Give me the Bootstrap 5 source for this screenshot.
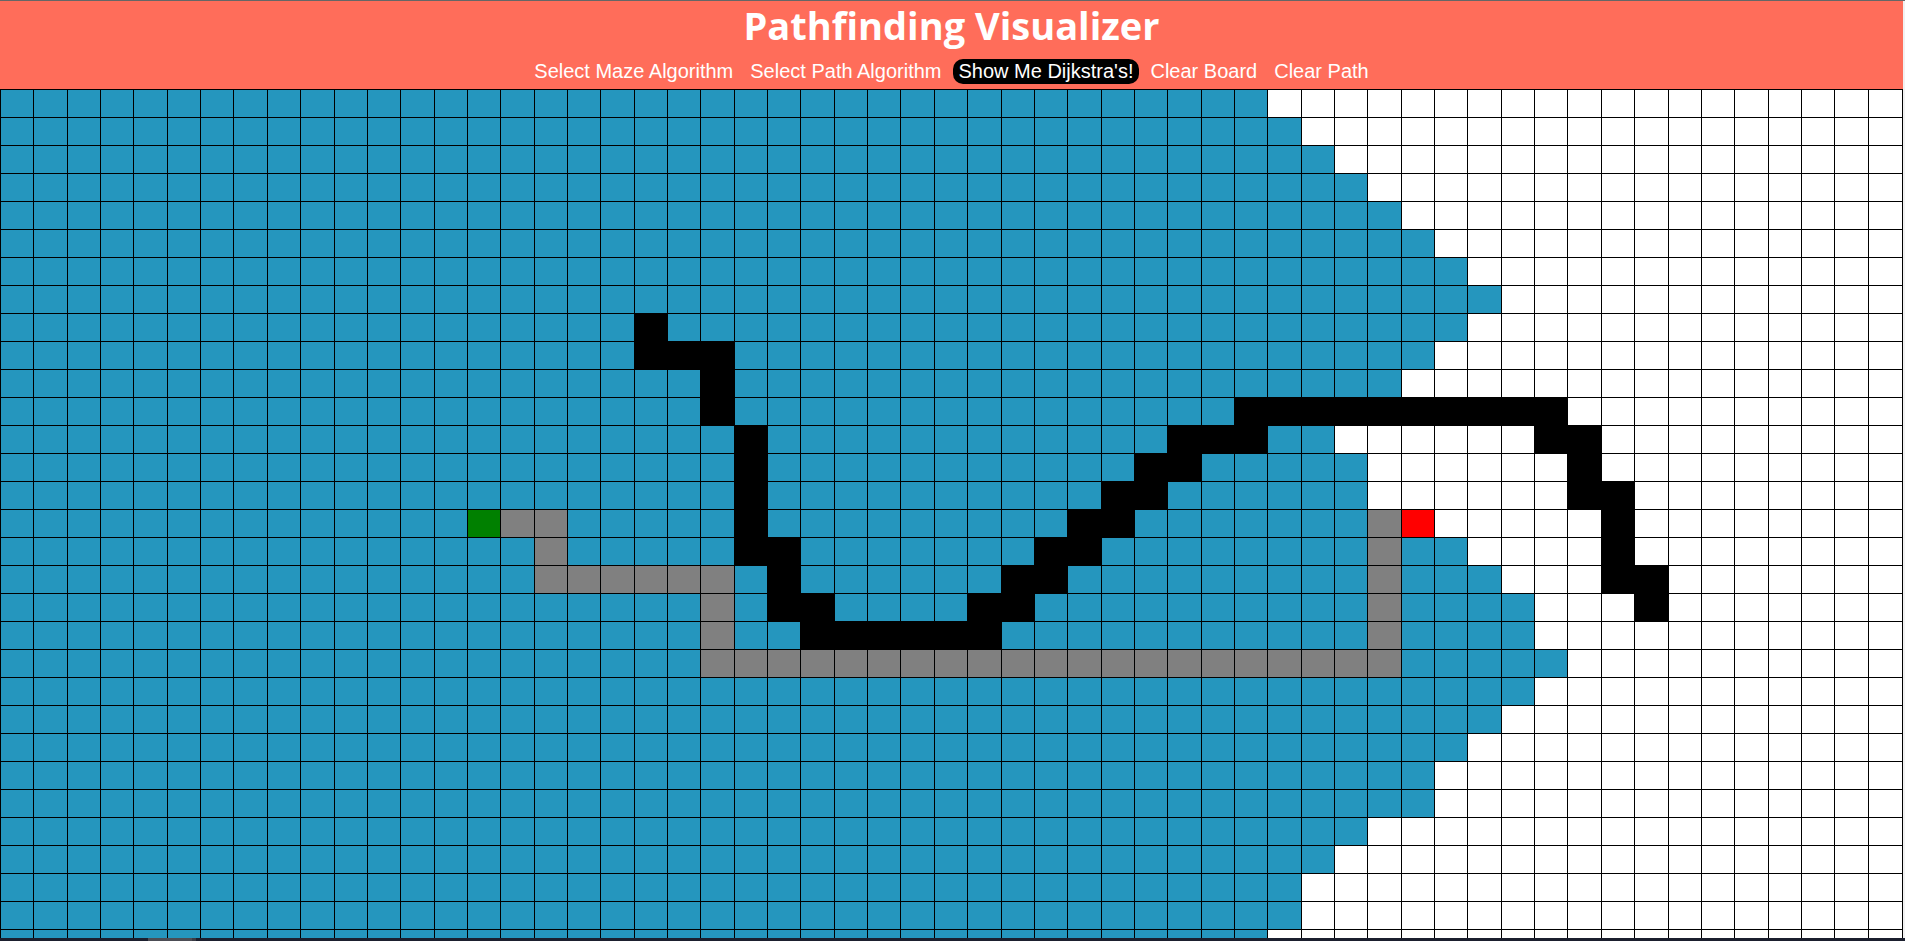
<!DOCTYPE html>
<html lang="en">
<head>
<meta charset="utf-8">
<meta name="viewport" content="width=device-width, initial-scale=1">
<title>Pathfinding Visualizer</title>
<link rel="stylesheet" href="https://cdn.jsdelivr.net/npm/bootstrap@5.3.0/dist/css/bootstrap.min.css">
<style>
  .app { border-top: 1px solid #666; }
  .track { width: 2px; background: #f1f1f1; }
  .topbar { background: #ff6d5a; height: 88px; }
  .topbar h1 { font: 700 38px/48px "Open Sans", "Noto Sans", sans-serif; }
  .tools { gap: 5px; padding-top: 10px; }
  .tool {
    font: 20px/25px "Liberation Sans", Arial, sans-serif;
    color: #fff; background: transparent; border: 0; border-radius: 10px; padding: 0 6px;
  }
  .tool.run, .tool:hover { background: #000; }
  .board {
    display: grid;
    grid-template-columns: repeat(57, minmax(0, 1fr));
    grid-auto-rows: 28px;
    border-right: 1px solid #000;
    padding-right: 1px;
    min-height: 0;
  }
  .cell { border: solid #000; border-width: 1px 0 0 1px; background: #fff; }
  .cell:nth-child(57n) { margin-right: -1px; }
  .visited { background: #2596be; }
  .route { background: #808080; }
  .wall { background: #000; }
  .start { background: #008000; }
  .goal { background: #f00; }
  .dock { height: 3px; background: #1b1f2e; padding-left: 148px; }
  .dock-tab { width: 44px; background: #4c4d55; }
  .dock-edge { width: 4px; background: #3a3c45; }
</style>
</head>
<body>
<div class="app d-flex flex-column vh-100">
  <div class="d-flex flex-grow-1" style="min-height: 0">
    <div class="d-flex flex-column flex-grow-1">
      <header class="topbar text-white text-center flex-shrink-0">
        <h1 class="m-0">Pathfinding Visualizer</h1>
        <nav class="tools d-flex justify-content-center" aria-label="Controls">
          <button type="button" class="tool">Select Maze Algorithm</button>
          <button type="button" class="tool">Select Path Algorithm</button>
          <button type="button" class="tool run">Show Me Dijkstra's!</button>
          <button type="button" class="tool">Clear Board</button>
          <button type="button" class="tool">Clear Path</button>
        </nav>
      </header>
      <main class="board flex-grow-1 overflow-hidden" id="board"></main>
    </div>
    <div class="track flex-shrink-0"></div>
  </div>
  <div class="dock d-flex flex-shrink-0">
    <div class="dock-tab"></div>
    <div class="dock-edge"></div>
  </div>
</div>
<script src="https://cdn.jsdelivr.net/npm/bootstrap@5.3.0/dist/js/bootstrap.bundle.min.js"></script>
<script>
  const COLS = 57;
  // Number of columns the search has reached in each row
  const reach = [38, 39, 40, 41, 42, 43, 44, 45, 44, 43, 42, 37, 40, 41, 41, 41,
                 44, 45, 46, 46, 47, 46, 45, 44, 43, 43, 41, 40, 39, 39, 38];
  // Spans of [first, last] column, by row
  const walls = {
    8: [[19, 19]], 9: [[19, 21]], 10: [[21, 21]], 11: [[21, 21], [37, 46]],
    12: [[22, 22], [35, 37], [46, 47]], 13: [[22, 22], [34, 35], [47, 47]],
    14: [[22, 22], [33, 34], [47, 48]], 15: [[22, 22], [32, 33], [48, 48]],
    16: [[22, 23], [31, 32], [48, 48]], 17: [[23, 23], [30, 31], [48, 49]],
    18: [[23, 24], [29, 30], [49, 49]], 19: [[24, 29]]
  };
  const route = {
    15: [[15, 16], [41, 41]], 16: [[16, 16], [41, 41]], 17: [[16, 21], [41, 41]],
    18: [[21, 21], [41, 41]], 19: [[21, 21], [41, 41]], 20: [[21, 41]]
  };
  const within = (spans, c) => (spans || []).some(([a, b]) => c >= a && c <= b);
  const board = document.getElementById('board');
  reach.forEach((end, r) => {
    for (let c = 0; c < COLS; c++) {
      const cell = document.createElement('div');
      let kind = c < end ? 'visited' : 'open';
      if (within(walls[r], c)) kind = 'wall';
      if (within(route[r], c)) kind = 'route';
      if (r === 15 && c === 14) kind = 'start';
      if (r === 15 && c === 42) kind = 'goal';
      cell.className = 'cell ' + kind;
      board.append(cell);
    }
  });
</script>
</body>
</html>
